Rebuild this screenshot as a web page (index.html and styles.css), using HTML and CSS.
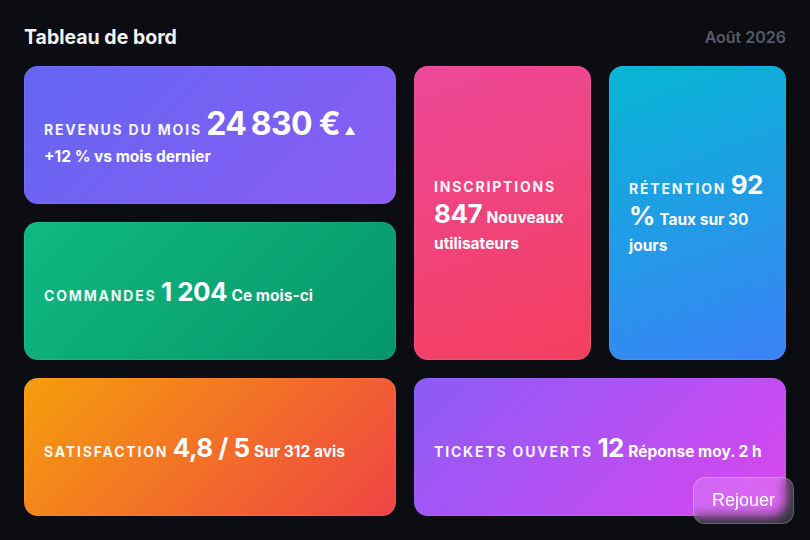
FILE: index.html
```html
<!DOCTYPE html>
<html lang="fr">
<head>
<meta charset="utf-8">
<title>Tableau de bord</title>
<link rel="stylesheet" href="styles.css">
</head>
<body>
<div class="page">
  <header class="top">
    <h1 class="title">Tableau de bord</h1>
    <span class="date">Août 2026</span>
  </header>
  <main class="grid">
    <section class="card c-rev">
      <div class="content"><span class="label">Revenus du mois</span> <span class="value big">24&#8239;830&nbsp;€</span> <span class="trend">▲</span> <span class="sub">+12 % vs mois dernier</span></div>
    </section>
    <section class="card c-ins">
      <div class="content"><span class="label">Inscriptions</span> <span class="value">847</span> <span class="sub">Nouveaux utilisateurs</span></div>
    </section>
    <section class="card c-ret">
      <div class="content"><span class="label">Rétention</span> <span class="value">92 %</span> <span class="sub">Taux sur 30 jours</span></div>
    </section>
    <section class="card c-cmd">
      <div class="content"><span class="label">Commandes</span> <span class="value">1&nbsp;204</span> <span class="sub">Ce mois-ci</span></div>
    </section>
    <section class="card c-sat">
      <div class="content"><span class="label">Satisfaction</span> <span class="value">4,8 / 5</span> <span class="sub">Sur 312 avis</span></div>
    </section>
    <section class="card c-tix">
      <div class="content"><span class="label">Tickets ouverts</span> <span class="value">12</span> <span class="sub">Réponse moy. 2 h</span></div>
    </section>
  </main>
</div>
<button class="replay" type="button">Rejouer</button>
</body>
</html>
```

FILE: styles.css
```css
* { box-sizing: border-box; }
html, body { margin: 0; height: 100%; }
body {
  background: #0c0d12;
  color: #ffffff;
  font-family: Inter, "Noto Sans", sans-serif;
}
.page {
  padding: 24px;
  display: flex;
  flex-direction: column;
  gap: 17px;
}
.top {
  display: flex;
  justify-content: space-between;
  align-items: center;
  height: 25px;
}
.title {
  margin: 0;
  font-size: 19.5px;
  font-weight: 700;
  color: #f3f4f6;
}
.date {
  font-size: 16px;
  font-weight: 600;
  color: #575b66;
}
.grid {
  display: grid;
  grid-template-columns: repeat(4, 1fr);
  grid-template-rows: repeat(3, 138px);
  gap: 18px;
}
.card {
  border-radius: 14px;
  padding: 4px 20px 0;
  display: flex;
  align-items: center;
  box-shadow: inset 0 0 0 1px rgba(255, 255, 255, 0.07);
}
.content {
  font-size: 15.5px;
  line-height: 26px;
}
.label {
  font-size: 14px;
  font-weight: 700;
  text-transform: uppercase;
  letter-spacing: 0.13em;
  opacity: 0.94;
}
.value {
  font-size: 26px;
  font-weight: 700;
  line-height: 28px;
  letter-spacing: -0.02em;
}
.value.big {
  font-size: 32px;
  line-height: 40px;
}
.trend { font-size: 11px; }
.sub {
  font-weight: 700;
}
.c-rev { grid-column: 1 / 3; grid-row: 1; background: linear-gradient(135deg, #6366f1, #8b5cf6); }
.c-cmd { grid-column: 1 / 3; grid-row: 2; background: linear-gradient(135deg, #10b981, #059669); }
.c-sat { grid-column: 1 / 3; grid-row: 3; background: linear-gradient(135deg, #f59e0b, #ef4444); }
.c-ins { grid-column: 3; grid-row: 1 / 3; background: linear-gradient(160deg, #ec4899, #f43f5e); }
.c-ret { grid-column: 4; grid-row: 1 / 3; background: linear-gradient(160deg, #06b6d4, #3b82f6); }
.c-tix { grid-column: 3 / 5; grid-row: 3; background: linear-gradient(135deg, #8b5cf6, #d946ef); }
.replay {
  position: fixed;
  right: 16px;
  bottom: 16px;
  font-family: "Liberation Sans", Arial, sans-serif;
  font-size: 18px;
  color: #ffffff;
  padding: 12px 18px;
  border-radius: 12px;
  border: 1px solid rgba(255, 255, 255, 0.22);
  background: rgba(255, 255, 255, 0.16);
  backdrop-filter: blur(6px);
}
```
